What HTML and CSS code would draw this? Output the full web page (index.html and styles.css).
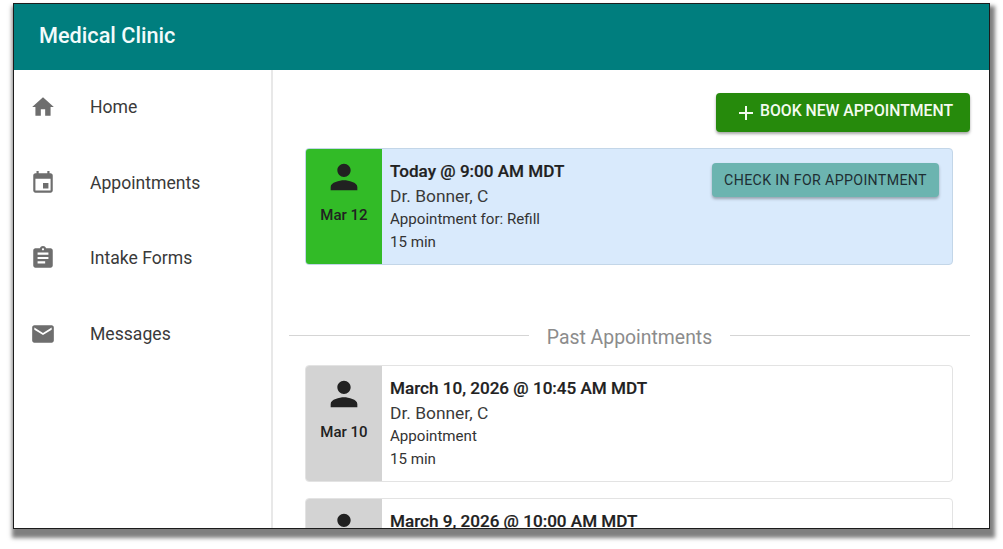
FILE: index.html
```html
<!DOCTYPE html>
<html lang="en">
<head>
<meta charset="utf-8">
<title>Medical Clinic</title>
<link rel="stylesheet" href="styles.css">
</head>
<body>
<div class="window">
  <header class="appbar">Medical Clinic</header>
  <div class="layout">
    <nav class="sidebar">
      <a class="nav-item"><svg class="nav-icon" viewBox="0 0 24 24"><path d="M10 20v-6h4v6h5v-8h3L12 3 2 12h3v8z"/></svg><span>Home</span></a>
      <a class="nav-item"><svg class="nav-icon" viewBox="0 0 24 24"><path d="M17 12h-5v5h5v-5zM16 1v2H8V1H6v2H5c-1.11 0-1.99.9-1.99 2L3 19c0 1.1.89 2 2 2h14c1.1 0 2-.9 2-2V5c0-1.1-.9-2-2-2h-1V1h-2zm3 18H5V8h14v11z"/></svg><span>Appointments</span></a>
      <a class="nav-item"><svg class="nav-icon" viewBox="0 0 24 24"><path d="M19 3h-4.18C14.4 1.84 13.3 1 12 1c-1.3 0-2.4.84-2.82 2H5c-1.1 0-2 .9-2 2v14c0 1.1.9 2 2 2h14c1.1 0 2-.9 2-2V5c0-1.1-.9-2-2-2zm-7 0c.55 0 1 .45 1 1s-.45 1-1 1-1-.45-1-1 .45-1 1-1zm2 14H7v-2h7v2zm3-4H7v-2h10v2zm0-4H7V7h10v2z"/></svg><span>Intake Forms</span></a>
      <a class="nav-item"><svg class="nav-icon" viewBox="0 0 24 24"><path d="M20 4H4c-1.1 0-1.99.9-1.99 2L2 18c0 1.1.9 2 2 2h16c1.1 0 2-.9 2-2V6c0-1.1-.9-2-2-2zm0 4l-8 5-8-5V6l8 5 8-5v2z"/></svg><span>Messages</span></a>
    </nav>
    <main class="content">
      <div class="actions">
        <button class="btn-book"><svg class="plus" viewBox="0 0 24 24"><path d="M19 13h-6v6h-2v-6H5v-2h6V5h2v6h6v2z"/></svg>BOOK NEW APPOINTMENT</button>
      </div>
      <article class="card card-today">
        <div class="side side-green">
          <svg class="person" viewBox="0 0 24 24"><path d="M12 12c2.21 0 4-1.79 4-4s-1.79-4-4-4-4 1.79-4 4 1.79 4 4 4zm0 2c-2.67 0-8 1.34-8 4v2h16v-2c0-2.66-5.33-4-8-4z"/></svg>
          <div class="side-date">Mar 12</div>
        </div>
        <div class="info">
          <div class="title">Today @ 9:00 AM MDT</div>
          <div class="doctor">Dr. Bonner, C</div>
          <div class="meta">Appointment for: Refill</div>
          <div class="meta">15 min</div>
        </div>
        <button class="btn-checkin">CHECK IN FOR APPOINTMENT</button>
      </article>
      <div class="divider"><span>Past Appointments</span></div>
      <article class="card">
        <div class="side">
          <svg class="person" viewBox="0 0 24 24"><path d="M12 12c2.21 0 4-1.79 4-4s-1.79-4-4-4-4 1.79-4 4 1.79 4 4 4zm0 2c-2.67 0-8 1.34-8 4v2h16v-2c0-2.66-5.33-4-8-4z"/></svg>
          <div class="side-date">Mar 10</div>
        </div>
        <div class="info">
          <div class="title">March 10, 2026 @ 10:45 AM MDT</div>
          <div class="doctor">Dr. Bonner, C</div>
          <div class="meta">Appointment</div>
          <div class="meta">15 min</div>
        </div>
      </article>
      <article class="card">
        <div class="side">
          <svg class="person" viewBox="0 0 24 24"><path d="M12 12c2.21 0 4-1.79 4-4s-1.79-4-4-4-4 1.79-4 4 1.79 4 4 4zm0 2c-2.67 0-8 1.34-8 4v2h16v-2c0-2.66-5.33-4-8-4z"/></svg>
          <div class="side-date">Mar 9</div>
        </div>
        <div class="info">
          <div class="title">March 9, 2026 @ 10:00 AM MDT</div>
          <div class="doctor">Dr. Bonner, C</div>
          <div class="meta">Appointment</div>
          <div class="meta">15 min</div>
        </div>
      </article>
    </main>
  </div>
</div>
</body>
</html>
```
FILE: styles.css
```css
* { box-sizing: border-box; }
html, body { height: 100%; }
body {
  margin: 0;
  padding: 3px 13px 0;
  background: #fff;
  font-family: Roboto, "Liberation Sans", sans-serif;
  color: #212121;
  overflow: hidden;
}
.window {
  width: 977px;
  height: 526px;
  border: 1px solid #1c1c1c;
  background: #fff;
  box-shadow: 2px 6px 4px 3px rgba(0, 0, 0, 0.5);
  display: flex;
  flex-direction: column;
  overflow: hidden;
}
.appbar {
  flex: none;
  height: 66px;
  background: #007e7e;
  color: #f2fbfb;
  font-size: 21.7px;
  font-weight: 500;
  line-height: 63px;
  padding-left: 25px;
}
.layout { flex: 1; display: flex; min-height: 0; }
.sidebar {
  flex: none;
  width: 259px;
  border-right: 2px solid #e8e8e8;
}
.nav-item {
  display: flex;
  align-items: center;
  height: 75.7px;
  padding: 0 0 2px 16px;
  font-size: 17.6px;
  color: #3a3a3a;
}
.nav-icon { width: 26px; height: 26px; fill: #6e6e6e; margin-right: 34px; flex: none; }
.content {
  flex: 1;
  min-width: 0;
  padding: 23px 19px 0 16px;
  display: flex;
  flex-direction: column;
}
.actions { display: flex; justify-content: flex-end; margin-bottom: 16px; }
.btn-book {
  width: 254px;
  height: 39px;
  border: 0;
  border-radius: 4px;
  background: #268a0c;
  color: #f4fbf0;
  font: 500 15.75px Roboto, sans-serif;
  display: flex;
  align-items: center;
  padding: 0 0 5px 20px;
  box-shadow: 0 2px 3px rgba(0, 0, 0, 0.35);
}
.plus { width: 24px; height: 24px; fill: #f4fbf0; margin: 5px 2px 0 -2px; flex: none; }
.card {
  flex: none;
  display: flex;
  height: 117px;
  margin: 0 17px 16px 16px;
  border: 1px solid #e3e3e3;
  border-radius: 4px;
  overflow: hidden;
  background: #fff;
  position: relative;
}
.card-today { background: #d9eafc; border-color: #c3d6e8; margin-bottom: 0; }
.side {
  flex: none;
  width: 76px;
  background: #d3d3d3;
  display: flex;
  flex-direction: column;
  align-items: center;
  padding-top: 8px;
}
.side-green { background: #32bb27; }
.person { width: 40px; height: 40px; fill: #212121; flex: none; }
.side-date { font-size: 15px; font-weight: 500; margin-top: 9px; }
.info { flex: 1; padding: 9px 8px 0; }
.title { font-size: 17.1px; font-weight: 500; line-height: 26px; -webkit-text-stroke: 0.2px currentColor; }
.doctor { font-size: 17.4px; line-height: 24px; color: #3a3a3a; }
.meta { font-size: 15.1px; line-height: 23px; color: #333; }
.btn-checkin {
  position: absolute;
  top: 14px;
  right: 13px;
  width: 227px;
  height: 34px;
  border: 0;
  border-radius: 4px;
  background: #6cb4b0;
  color: #1e2e33;
  font: 400 14.2px Roboto, sans-serif;
  letter-spacing: 0.35px;
  padding: 0;
  box-shadow: 0 2px 3px rgba(0, 0, 0, 0.3);
}
.divider {
  flex: none;
  display: flex;
  align-items: center;
  height: 30px;
  margin: 55px 0 15px;
  color: #8c8c8c;
  font-size: 19.4px;
}
.divider::before, .divider::after {
  content: "";
  flex: 1;
  height: 1px;
  background: #d5d5d5;
}
.divider span { padding: 4px 18px 0; }
```
